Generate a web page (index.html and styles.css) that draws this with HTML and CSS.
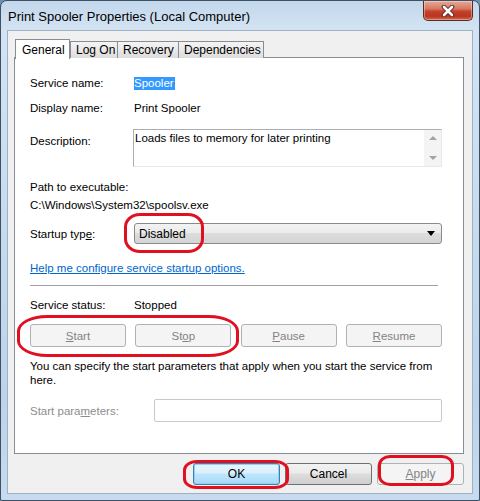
FILE: index.html
```html
<!DOCTYPE html>
<html>
<head>
<meta charset="utf-8">
<link rel="stylesheet" href="styles.css">
</head>
<body>
<div class="window">
  <div class="titlebar">
    <span class="title">Print Spooler Properties (Local Computer)</span>
    <div class="close">
      <svg width="18" height="12" viewBox="0 0 18 12">
        <path d="M5 2 L13 10 M13 2 L5 10" stroke="#5a2418" stroke-width="4.5" stroke-linecap="round"/>
        <path d="M5 2 L13 10 M13 2 L5 10" stroke="#ffffff" stroke-width="2.6" stroke-linecap="round"/>
      </svg>
    </div>
  </div>
  <div class="client">
    <div class="tabs">
      <div class="tab selected">General</div>
      <div class="tab">Log On</div>
      <div class="tab">Recovery</div>
      <div class="tab">Dependencies</div>
    </div>
    <div class="panel">
      <div class="row r1">
        <span class="label">Service name:</span>
        <span class="value"><span class="sel">Spooler</span></span>
      </div>
      <div class="row r2">
        <span class="label">Display name:</span>
        <span class="value">Print Spooler</span>
      </div>
      <div class="row desc-row">
        <span class="label desc-label">Description:</span>
        <div class="descbox">
          <span class="desc-text">Loads files to memory for later printing</span>
          <div class="scroll">
            <span class="arr up"></span>
            <span class="arr down"></span>
          </div>
        </div>
      </div>
      <div class="line path-label">Path to executable:</div>
      <div class="line path-value">C:\Windows\System32\spoolsv.exe</div>
      <div class="row startup">
        <span class="label">Startup typ<u>e</u>:</span>
        <div class="combo">
          <span>Disabled</span>
          <span class="combo-arrow"></span>
        </div>
      </div>
      <div class="line help"><a class="link">Help me configure service startup options.</a></div>
      <div class="sep"></div>
      <div class="row status">
        <span class="label">Service status:</span>
        <span class="value">Stopped</span>
      </div>
      <div class="svc-buttons">
        <div class="btn disabled"><u>S</u>tart</div>
        <div class="btn disabled">St<u>o</u>p</div>
        <div class="btn disabled"><u>P</u>ause</div>
        <div class="btn disabled"><u>R</u>esume</div>
      </div>
      <div class="para">You can specify the start parameters that apply when you start the service from here.</div>
      <div class="row params">
        <span class="label wide grey">Start para<u>m</u>eters:</span>
        <div class="input"></div>
      </div>
    </div>
    <div class="dlg-buttons">
      <div class="btn dlg ok">OK</div>
      <div class="btn dlg">Cancel</div>
      <div class="btn dlg disabled"><u>A</u>pply</div>
    </div>
  </div>
  <div class="mark m-disabled"></div>
  <div class="mark m-startstop"></div>
  <div class="mark m-ok"></div>
  <div class="mark m-apply"></div>
</div>
</body>
</html>
```

FILE: styles.css
```css
* { box-sizing: border-box; }
html, body { margin: 0; padding: 0; }
body {
  width: 480px;
  height: 501px;
  overflow: hidden;
  font-family: "Liberation Sans", Arial, sans-serif;
  font-size: 11.5px;
  color: #000;
  background: #6f8fae;
}
.window {
  position: relative;
  width: 480px;
  height: 501px;
  border: 1px solid #3d5066;
  border-radius: 7px 7px 2px 2px;
  padding: 0 6px;
  background: linear-gradient(180deg, #c4d8ec 0%, #d3e3f3 6%, #c9dcef 40%, #bcd3ea 80%, #c8dbee 100%);
}
.titlebar {
  height: 29px;
  display: flex;
  align-items: flex-start;
}
.title {
  font-size: 13px;
  line-height: 16px;
  margin-top: 8px;
  padding-left: 1px;
  color: #000;
}
.close {
  margin-left: auto;
  width: 50px;
  height: 20px;
  border: 1px solid #5d2a22;
  border-top: none;
  border-radius: 0 0 5px 5px;
  background: linear-gradient(180deg, #e6a796 0%, #d77a63 40%, #c3412a 55%, #b93520 80%, #d06a4e 100%);
  box-shadow: inset 0 0 0 1px rgba(255,255,255,0.35);
  display: flex;
  align-items: center;
  justify-content: center;
}
.client {
  width: 466px;
  height: 464px;
  background: #f0f0f0;
  border: 1px solid #9fb0c3;
  padding: 7px 8px 0 6px;
}
.tabs {
  display: flex;
  align-items: flex-end;
  padding-left: 1px;
  height: 20px;
  position: relative;
  z-index: 1;
}
.tab {
  height: 17px;
  padding: 0 0 0 5px;
  line-height: 16px;
  font-size: 12px;
  white-space: nowrap;
  border: 1px solid #898c95;
  border-bottom: none;
  margin-right: -1px;
  background: linear-gradient(180deg, #f4f4f4 0%, #e9e9e9 50%, #dcdcdc 100%);
}
.tab.selected {
  height: 20px;
  width: 55px;
  padding: 2px 0 0 6px;
  background: #fff;
  margin-bottom: -1px;
  margin-right: 0;
}
.tab:nth-child(2) { width: 48px; }
.tab:nth-child(3) { width: 62px; }
.tab:nth-child(4) { width: 86px; }
.panel {
  width: 450px;
  height: 397px;
  margin-top: -1px;
  background: #fff;
  border: 1px solid #898c95;
  padding: 17px 21px 0 15px;
}
.row {
  display: flex;
  align-items: center;
}
.label {
  width: 104px;
  flex: none;
  line-height: 16px;
}
.value { line-height: 16px; }
.r1 { height: 16px; }
.sel {
  background: #3399ff;
  color: #fff;
  padding: 0 1px 1px 0;
}
.r2 { height: 16px; margin-top: 9px; }
.desc-row { margin-top: 13px; align-items: flex-start; height: 38px; }
.desc-label { margin-top: 4px; }
.descbox {
  flex: 1;
  height: 38px;
  margin-left: -1px;
  border: 1px solid #abadb3;
  border-right-color: #e3e9ef;
  border-bottom-color: #e3e9ef;
  display: flex;
}
.desc-text {
  flex: 1;
  padding: 1px 0 0 1px;
  line-height: 14px;
}
.scroll {
  width: 17px;
  background: #f4f4f4;
  position: relative;
}
.arr {
  position: absolute;
  left: 5px;
  width: 0;
  height: 0;
  border-left: 4px solid transparent;
  border-right: 4px solid transparent;
}
.arr.up { top: 6px; border-bottom: 4px solid #a3a3a3; }
.arr.down { bottom: 6px; border-top: 4px solid #a3a3a3; }
.line { line-height: 16px; }
.path-label { margin-top: 12px; }
.path-value { margin-top: 2px; }
.startup { margin-top: 10px; height: 21px; }
.combo {
  flex: 1;
  height: 21px;
  border: 1px solid #8a8a8a;
  border-radius: 3px;
  background: linear-gradient(180deg, #f3f3f3 0%, #ebebeb 45%, #dddddd 50%, #d4d4d4 100%);
  display: flex;
  align-items: center;
  padding: 0 6px 0 4px;
  font-size: 12px;
}
.combo span:first-child { flex: 1; }
.combo-arrow {
  width: 0;
  height: 0;
  border-left: 4px solid transparent;
  border-right: 4px solid transparent;
  border-top: 5px solid #000;
}
.help { margin-top: 16px; }
.link {
  color: #0066cc;
  text-decoration: underline;
}
.sep {
  margin-top: 9px;
  height: 1px;
  width: 408px;
  background: #a0a0a0;
}
.status { margin-top: 11px; height: 16px; }
.svc-buttons {
  margin-top: 11px;
  display: flex;
  justify-content: space-between;
}
.btn {
  height: 23px;
  border: 1px solid #707070;
  border-radius: 3px;
  background: linear-gradient(180deg, #f2f2f2 0%, #ebebeb 45%, #dddddd 50%, #cfcfcf 100%);
  display: flex;
  align-items: center;
  justify-content: center;
}
.btn.disabled {
  border-color: #adb2b5;
  background: #f4f4f4;
  color: #838383;
}
.svc-buttons .btn { width: 96px; }
.para {
  margin-top: 12px;
  line-height: 14px;
  width: 412px;
}
.params { margin-top: 12px; height: 23px; }
.label.wide { width: 124px; }
.grey { color: #8d8d8d; }
.input {
  flex: 1;
  height: 23px;
  border: 1px solid #c9c9c9;
  border-radius: 2px;
  background: #fff;
}
.dlg-buttons {
  margin-top: 9px;
  display: flex;
  justify-content: flex-end;
  gap: 5px;
}
.btn.dlg { width: 87px; height: 22px; font-size: 12px; }
.btn.ok {
  border-color: #3c7fb1;
  background: linear-gradient(180deg, #eaf6fd 0%, #d9f0fc 45%, #bee6fd 50%, #a7d9f5 100%);
  box-shadow: inset 0 0 0 1px #8fd2f5;
}
.mark {
  position: absolute;
  border: 3px solid #e01020;
  border-radius: 16px / 14px;
}
.m-disabled { left: 123px; top: 212px; width: 80px; height: 40px; }
.m-startstop { left: 16px; top: 314px; width: 222px; height: 42px; border-radius: 30px / 16px; }
.m-ok { left: 182px; top: 459px; width: 106px; height: 29px; border-radius: 14px / 10px; }
.m-apply { left: 377px; top: 454px; width: 76px; height: 31px; border-radius: 12px / 10px; }
```
